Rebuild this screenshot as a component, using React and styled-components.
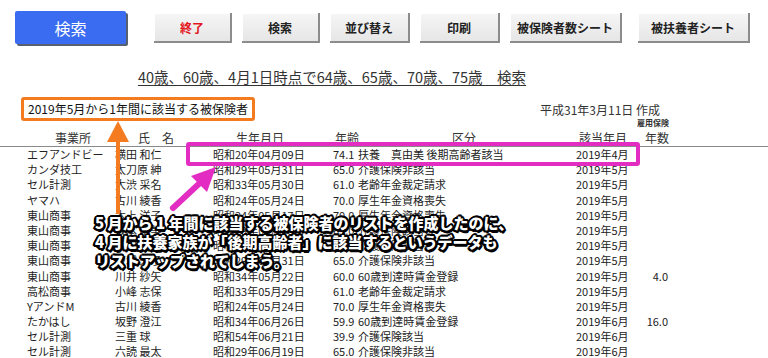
import React from "react";
import styled, { createGlobalStyle } from "styled-components";

const GlobalStyle = createGlobalStyle`
  html, body {
    margin: 0;
    padding: 0;
    background: #fff;
  }
  body {
    font-family: "Noto Sans CJK JP", "Noto Sans", sans-serif;
    color: #222;
  }
`;

const rows = [
  ["エフアンドビー", "横田 和仁", "昭和20年04月09日", "74.1", "扶養　真由美 後期高齢者該当", "2019年4月", ""],
  ["カンダ技工", "太刀原 紳", "昭和29年05月31日", "65.0", "介護保険非該当", "2019年5月", ""],
  ["セル計測", "大渋 采名", "昭和33年05月30日", "61.0", "老齢年金裁定請求", "2019年5月", ""],
  ["ヤマハ", "古川 綾香", "昭和24年05月24日", "70.0", "厚生年金資格喪失", "2019年5月", ""],
  ["東山商事", "木上 洋子", "昭和24年05月17日", "70.0", "厚生年金資格喪失", "2019年5月", ""],
  ["東山商事", "坂本 明美", "昭和29年05月08日", "65.0", "介護保険該当", "2019年5月", ""],
  ["東山商事", "和田 直子", "昭和29年05月15日", "65.0", "介護保険該当", "2019年5月", ""],
  ["東山商事", "坂城 栄子", "昭和29年05月31日", "65.0", "介護保険非該当", "2019年5月", ""],
  ["東山商事", "川井 紗矢", "昭和34年05月22日", "60.0", "60歳到達時賃金登録", "2019年5月", "4.0"],
  ["高松商事", "小峰 志保", "昭和33年05月29日", "61.0", "老齢年金裁定請求", "2019年5月", ""],
  ["YアンドM", "古川 綾香", "昭和24年05月24日", "70.0", "厚生年金資格喪失", "2019年5月", ""],
  ["たかはし", "坂野 澄江", "昭和34年06月26日", "59.9", "60歳到達時賃金登録", "2019年6月", "16.0"],
  ["セル計測", "三重 球", "昭和54年06月21日", "39.9", "介護保険該当", "2019年6月", ""],
  ["セル計測", "六読 最太", "昭和29年06月19日", "65.0", "介護保険非該当", "2019年6月", ""]
];

const buttons = [
  { label: "終了", width: 78, danger: true },
  { label: "検索", width: 78 },
  { label: "並び替え", width: 80 },
  { label: "印刷", width: 80 },
  { label: "被保険者数シート", width: 112 },
  { label: "被扶養者シート", width: 112, far: true }
];

export default function App() {
  return (
    <>
      <GlobalStyle />
      <Sheet>
        <Toolbar>
          <SearchButton>検索</SearchButton>
          <ButtonGroup>
            {buttons.map((b) => (
              <SheetButton
                key={b.label}
                $width={b.width}
                $danger={b.danger}
                $far={b.far}
              >
                {b.label}
              </SheetButton>
            ))}
          </ButtonGroup>
        </Toolbar>

        <TitleLink>40歳、60歳、4月1日時点で64歳、65歳、70歳、75歳　検索</TitleLink>

        <InfoRow>
          <RangeLabel>2019年5月から1年間に該当する被保険者</RangeLabel>
          <Created>平成31年3月11日 作成</Created>
        </InfoRow>

        <HeadRow>
          <HeadCell>事業所</HeadCell>
          <HeadCell>氏　名</HeadCell>
          <HeadCell>生年月日</HeadCell>
          <HeadCell>年齢</HeadCell>
          <HeadCell>区分</HeadCell>
          <HeadCell>該当年月</HeadCell>
          <HeadCell>
            <Tiny>雇用保険</Tiny>
            年数
          </HeadCell>
        </HeadRow>

        {rows.map((r, i) => (
          <DataRow key={i}>
            <Cell>{r[0]}</Cell>
            <Cell>{r[1]}</Cell>
            <Cell>{r[2]}</Cell>
            <Cell>{r[3]}</Cell>
            <Cell>{r[4]}</Cell>
            <Cell>{r[5]}</Cell>
            <Cell $right>{r[6]}</Cell>
          </DataRow>
        ))}

        <Highlight />
        <Arrows width="768" height="358" viewBox="0 0 768 358">
          <line x1="118" y1="214" x2="118" y2="138" stroke="#f47b20" strokeWidth="4" />
          <polygon points="107,142 129,142 118,121" fill="#f47b20" />
          <line x1="173" y1="208" x2="202" y2="181" stroke="#e32dc2" strokeWidth="6" strokeLinecap="round" />
          <polygon points="216,167 191,176 207,192" fill="#e32dc2" />
        </Arrows>
        <Caption>
          5 月から 1 年間に該当する被保険者のリストを作成したのに、
          <br />
          4 月に扶養家族が「後期高齢者」に該当するというデータも
          <br />
          リストアップされてしまう。
        </Caption>
      </Sheet>
    </>
  );
}

const Sheet = styled.div`
  position: relative;
  width: 768px;
  height: 358px;
  overflow: hidden;
`;

const Toolbar = styled.div`
  display: flex;
  align-items: flex-start;
  padding: 11px 0 0 15px;
  height: 34px;
`;

const SearchButton = styled.button`
  width: 111px;
  height: 33px;
  border: none;
  border-radius: 2px;
  background: #3a6cf2;
  color: #fff;
  font-family: "Noto Sans CJK JP", sans-serif;
  font-size: 16px;
  box-shadow: 2px 2px 0 #56606e;
  padding: 0;
`;

const ButtonGroup = styled.div`
  display: flex;
  gap: 10px;
  margin-left: 28px;
  margin-top: 2px;
`;

const SheetButton = styled.button`
  width: ${(p) => p.$width}px;
  height: 30px;
  margin-left: ${(p) => (p.$far ? "6px" : "0")};
  padding: 0;
  border: none;
  border-right: 2px solid #8c8c8c;
  border-bottom: 2px solid #8c8c8c;
  background: linear-gradient(#f6f6f6, #e6e6e6);
  box-shadow: inset 1px 1px 0 #fff;
  color: ${(p) => (p.$danger ? "#e3151b" : "#222")};
  font-family: "Noto Sans CJK JP", sans-serif;
  font-size: 12px;
  font-weight: 700;
`;

const TitleLink = styled.div`
  margin-top: 23px;
  text-align: center;
  padding-right: 104px;
  font-size: 14.5px;
  line-height: 18px;
  color: #333;
  text-decoration: underline;
  text-underline-offset: 2px;
`;

const InfoRow = styled.div`
  display: flex;
  align-items: center;
  justify-content: space-between;
  margin-top: 11px;
  padding: 0 108px 0 21px;
`;

const RangeLabel = styled.div`
  border: 3px solid #f47b20;
  border-radius: 3px;
  padding: 0 4px;
  height: 18px;
  line-height: 18px;
  font-size: 12px;
  color: #111;
  white-space: nowrap;
`;

const Created = styled.div`
  font-size: 12px;
  color: #333;
`;

const HeadRow = styled.div`
  display: grid;
  grid-template-columns: 27px 92px 74px 134px 40px 194px 84px 24px;
  align-items: end;
  height: 24px;
  border-bottom: 1px solid #8a8a8a;
  padding-bottom: 1px;
  & > :first-child {
    grid-column: 2;
  }
`;

const HeadCell = styled.div`
  position: relative;
  text-align: center;
  font-size: 12px;
  line-height: 15px;
  color: #333;
  white-space: nowrap;
`;

const Tiny = styled.span`
  position: absolute;
  left: -8px;
  top: -12px;
  font-size: 8px;
  font-weight: 700;
  line-height: 10px;
  color: #333;
`;

const DataRow = styled.div`
  display: grid;
  grid-template-columns: 27px 88px 98px 120px 25px 218px 60px 32px;
  height: 15.2px;
  line-height: 15.2px;
  font-size: 11px;
  color: #222;
  & > :first-child {
    grid-column: 2;
  }
`;

const Cell = styled.div`
  white-space: nowrap;
  text-align: ${(p) => (p.$right ? "right" : "left")};
`;

const Highlight = styled.div`
  position: absolute;
  left: 186px;
  top: 142px;
  width: 446px;
  height: 16px;
  border: 4px solid #e32dc2;
  border-radius: 3px;
`;

const Arrows = styled.svg`
  position: absolute;
  left: 0;
  top: 0;
  pointer-events: none;
`;

const Caption = styled.div`
  position: absolute;
  left: 95px;
  top: 213px;
  font-size: 15px;
  font-weight: 900;
  line-height: 19px;
  color: #fff;
  white-space: nowrap;
  text-shadow:
    2px 0 0 #000, -2px 0 0 #000, 0 2px 0 #000, 0 -2px 0 #000,
    1.5px 1.5px 0 #000, -1.5px 1.5px 0 #000, 1.5px -1.5px 0 #000, -1.5px -1.5px 0 #000,
    2.5px 1px 0 #000, -2.5px 1px 0 #000, 1px 2.5px 0 #000, 1px -2.5px 0 #000;
`;
